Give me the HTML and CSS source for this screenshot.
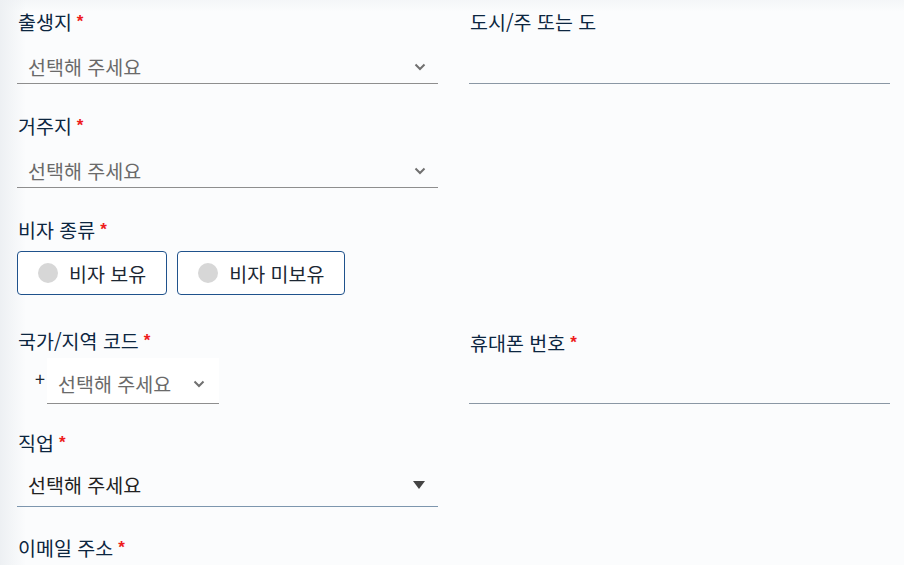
FILE: index.html
```html
<!DOCTYPE html>
<html lang="ko">
<head>
    <meta charset="UTF-8">
    <meta name="viewport" content="width=device-width, initial-scale=1.0">
    <title>신청서</title>
    <link rel="stylesheet" href="styles.css">
</head>
<body>
    <form class="form">
        <div class="row">
            <div class="field">
                <label class="label">출생지<span class="req">*</span></label>
                <div class="select">
                    <span class="placeholder">선택해 주세요</span>
                    <svg class="chev" width="12" height="8" viewBox="0 0 12 8"><path d="M1.5 1.5 L6 6 L10.5 1.5" fill="none" stroke="#707070" stroke-width="2"/></svg>
                </div>
            </div>
            <div class="field">
                <label class="label">도시/주 또는 도</label>
                <div class="input"></div>
            </div>
        </div>

        <div class="row">
            <div class="field">
                <label class="label">거주지<span class="req">*</span></label>
                <div class="select">
                    <span class="placeholder">선택해 주세요</span>
                    <svg class="chev" width="12" height="8" viewBox="0 0 12 8"><path d="M1.5 1.5 L6 6 L10.5 1.5" fill="none" stroke="#707070" stroke-width="2"/></svg>
                </div>
            </div>
        </div>

        <div class="row row-visa">
            <div class="field">
                <label class="label">비자 종류<span class="req">*</span></label>
                <div class="choices">
                    <button type="button" class="choice"><span class="dot"></span>비자 보유</button>
                    <button type="button" class="choice"><span class="dot"></span>비자 미보유</button>
                </div>
            </div>
        </div>

        <div class="row row-phone">
            <div class="field">
                <label class="label">국가/지역 코드<span class="req">*</span></label>
                <div class="code">
                    <span class="plus">+</span>
                    <div class="select select-code">
                        <span class="placeholder">선택해 주세요</span>
                        <svg class="chev" width="12" height="8" viewBox="0 0 12 8"><path d="M1.5 1.5 L6 6 L10.5 1.5" fill="none" stroke="#707070" stroke-width="2"/></svg>
                    </div>
                </div>
            </div>
            <div class="field">
                <label class="label label-phone">휴대폰 번호<span class="req">*</span></label>
                <div class="input input-phone"></div>
            </div>
        </div>

        <div class="row row-job">
            <div class="field">
                <label class="label">직업<span class="req">*</span></label>
                <div class="select select-job">
                    <span class="value">선택해 주세요</span>
                    <svg class="tri" width="12" height="8" viewBox="0 0 12 8"><path d="M0 0 H12 L6 8 Z" fill="#444"/></svg>
                </div>
            </div>
        </div>

        <div class="row row-email">
            <div class="field">
                <label class="label">이메일 주소<span class="req">*</span></label>
            </div>
        </div>
    </form>
</body>
</html>
```

FILE: styles.css
```css
body {
    margin: 0;
    font-family: "Noto Sans CJK KR", "Noto Sans", sans-serif;
    background:
        linear-gradient(to right, #edf0f3, rgba(255, 255, 255, 0) 26px),
        linear-gradient(to bottom, #f4f6f8, rgba(255, 255, 255, 0) 12px),
        #fbfcfd;
    height: 565px;
    overflow: hidden;
}

.form {
    padding: 10px 14px 0 17px;
}

.row {
    display: grid;
    grid-template-columns: 421px 421px;
    column-gap: 31px;
    margin-bottom: 30px;
}

.label {
    display: block;
    height: 24px;
    font-size: 19.5px;
    line-height: 24px;
    color: #0c2640;
    margin-left: 1px;
    white-space: nowrap;
}

.req {
    color: #ee1c1c;
    font-family: "Liberation Sans", sans-serif;
    font-size: 17px;
    font-weight: bold;
    line-height: 1;
    margin-left: 5px;
    position: relative;
    top: -3px;
}

.select {
    display: flex;
    align-items: center;
    justify-content: space-between;
    height: 36px;
    box-sizing: border-box;
    margin-top: 14px;
    padding: 3px 12px 0 11px;
    border-bottom: 1px solid #8e8e8e;
}

.placeholder {
    font-size: 19.5px;
    line-height: 24px;
    color: #6a6a6a;
}

.input {
    height: 36px;
    box-sizing: border-box;
    margin-top: 14px;
    border-bottom: 1px solid #8a97a4;
}

.choices {
    display: flex;
    gap: 10px;
    margin-top: 9px;
}

.choice {
    display: flex;
    align-items: center;
    gap: 11px;
    height: 44px;
    padding: 0 20px;
    background: #fff;
    border: 1px solid #1f528c;
    border-radius: 4px;
    font-family: inherit;
    font-size: 19.5px;
    color: #1c2733;
}

.dot {
    width: 20px;
    height: 20px;
    border-radius: 50%;
    background: #d7d7d7;
}

.row-visa {
    margin-bottom: 34px;
}

.row-phone {
    margin-bottom: 27px;
}

.code {
    display: flex;
    align-items: flex-end;
    margin-top: 5px;
    padding-left: 18px;
}

.plus {
    font-size: 18px;
    color: #1c2733;
    width: 12px;
    align-self: center;
    margin-top: -6px;
}

.select-code {
    width: 172px;
    height: 46px;
    margin-top: 0;
    padding: 6px 14px 0 11px;
    background: #fff;
}

.label-phone {
    margin-top: 2px;
}

.input-phone {
    height: 37px;
    margin-top: 12px;
}

.row-job {
    margin-bottom: 29px;
}

.select-job {
    height: 38px;
    padding: 0 12px 6px 11px;
    border-bottom-color: #7d96ae;
}

.value {
    font-size: 19.5px;
    line-height: 24px;
    color: #222;
}

.tri {
    margin-right: 1px;
}
```
